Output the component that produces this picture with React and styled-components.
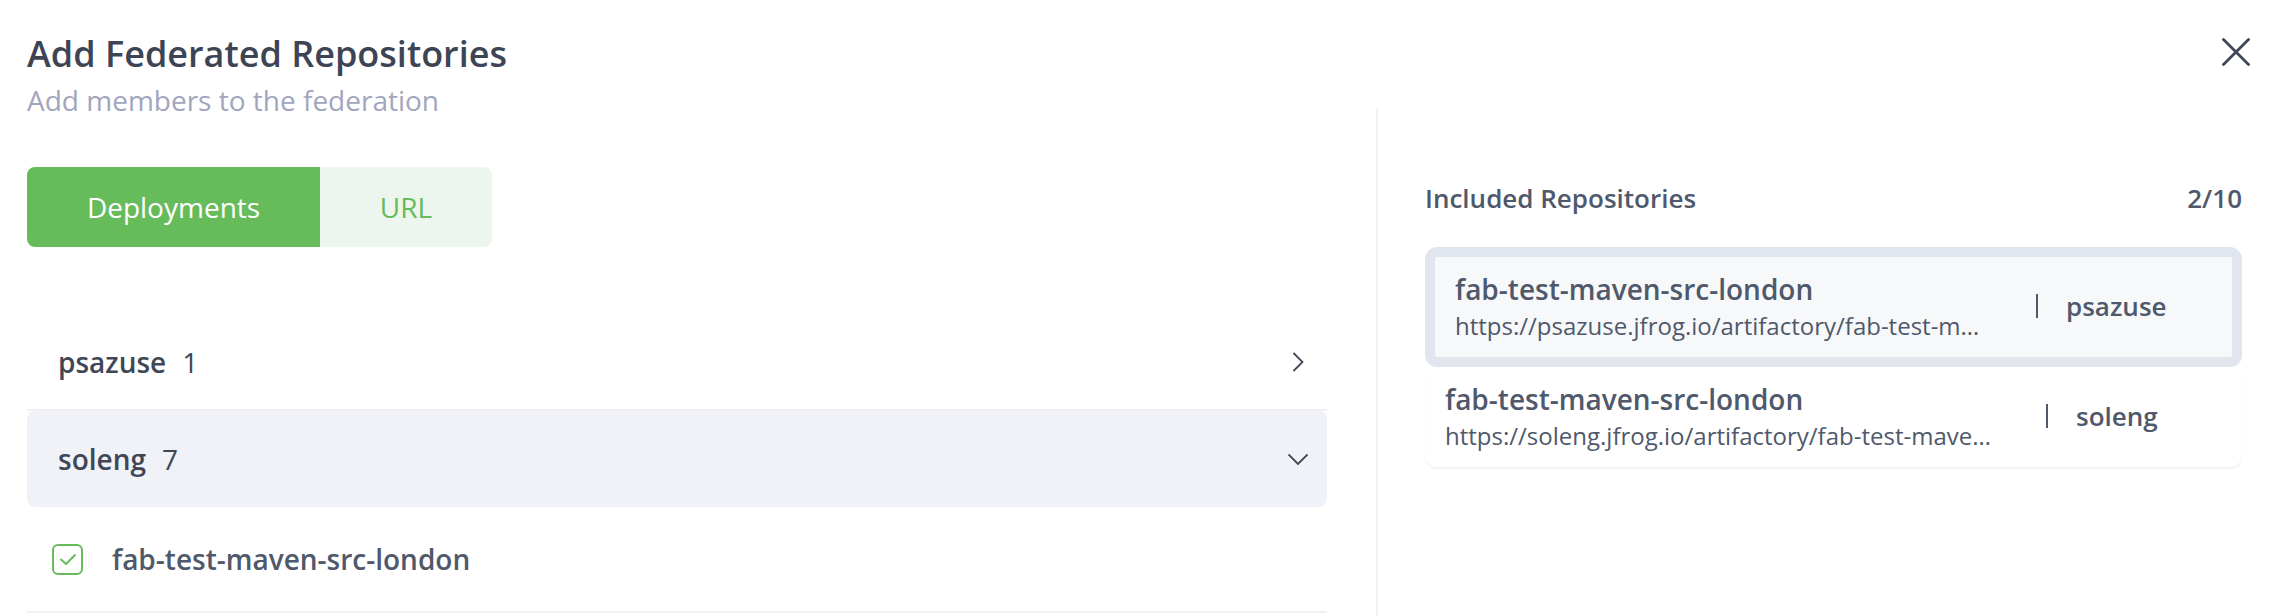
import React from "react";
import styled, { createGlobalStyle } from "styled-components";

const GlobalStyle = createGlobalStyle`
  * {
    box-sizing: border-box;
  }

  body {
    margin: 0;
    background: #ffffff;
    font-family: "Open Sans", "Noto Sans", sans-serif;
  }
`;

const groups = [
  { name: "psazuse", count: 1, open: false },
  { name: "soleng", count: 7, open: true, items: ["fab-test-maven-src-london"] },
];

const included = [
  {
    name: "fab-test-maven-src-london",
    url: "https://psazuse.jfrog.io/artifactory/fab-test-maven-src-london",
    group: "psazuse",
    selected: true,
  },
  {
    name: "fab-test-maven-src-london",
    url: "https://soleng.jfrog.io/artifactory/fab-test-maven-src-london",
    group: "soleng",
    selected: false,
  },
];

const ChevronRight = () => (
  <svg width="20" height="20" viewBox="0 0 20 20" fill="none">
    <path d="M5.5 1 L14.5 10 L5.5 19" stroke="#3f4756" strokeWidth="1.8" />
  </svg>
);

const ChevronDown = () => (
  <svg width="20" height="20" viewBox="0 0 20 20" fill="none">
    <path d="M0.5 5.5 L10 15 L19.5 5.5" stroke="#3f4756" strokeWidth="1.8" />
  </svg>
);

const CloseIcon = () => (
  <svg width="28" height="28" viewBox="0 0 28 28" fill="none">
    <path
      d="M1.5 1.5 L26.5 26.5 M26.5 1.5 L1.5 26.5"
      stroke="#3f4756"
      strokeWidth="2.8"
      strokeLinecap="round"
    />
  </svg>
);

const CheckIcon = () => (
  <svg width="20" height="20" viewBox="0 0 20 20" fill="none">
    <path
      d="M3 10.5 L8 15 L17 6"
      stroke="#66bb5b"
      strokeWidth="2"
      strokeLinecap="round"
      strokeLinejoin="round"
    />
  </svg>
);

const App = () => {
  return (
    <>
      <GlobalStyle />
      <StyleModal>
        <Header>
          <div>
            <Title>Add Federated Repositories</Title>
            <Subtitle>Add members to the federation</Subtitle>
          </div>
          <CloseButton aria-label="Close">
            <CloseIcon />
          </CloseButton>
        </Header>

        <Body>
          <LeftColumn>
            <Tabs>
              <Tab $active $width={293}>
                Deployments
              </Tab>
              <Tab $width={172}>URL</Tab>
            </Tabs>

            <GroupList>
              {groups.map((g) => (
                <React.Fragment key={g.name}>
                  <GroupRow $open={g.open}>
                    <GroupName>
                      {g.name}
                      <GroupCount>{g.count}</GroupCount>
                    </GroupName>
                    {g.open ? <ChevronDown /> : <ChevronRight />}
                  </GroupRow>
                  {g.open &&
                    g.items.map((item) => (
                      <RepoRow key={item}>
                        <Checkbox>
                          <CheckIcon />
                        </Checkbox>
                        <RepoName>{item}</RepoName>
                      </RepoRow>
                    ))}
                </React.Fragment>
              ))}
            </GroupList>
          </LeftColumn>

          <Divider />

          <RightColumn>
            <IncludedHeader>
              <span>Included Repositories</span>
              <span>2/10</span>
            </IncludedHeader>

            {included.map((r) => (
              <IncludedCard key={r.group} $selected={r.selected}>
                <CardText>
                  <CardName>{r.name}</CardName>
                  <CardUrl>{r.url}</CardUrl>
                </CardText>
                <CardSeparator />
                <CardGroup>{r.group}</CardGroup>
              </IncludedCard>
            ))}
          </RightColumn>
        </Body>
      </StyleModal>
    </>
  );
};

const StyleModal = styled.div`
  width: 2294px;
  height: 616px;
  overflow: hidden;
  background: #ffffff;
  display: flex;
  flex-direction: column;
`;

const Header = styled.header`
  display: flex;
  justify-content: space-between;
  align-items: flex-start;
  padding: 30px 44px 0 27px;
`;

const Title = styled.h1`
  margin: 0;
  font-size: 36px;
  line-height: 48px;
  font-weight: 600;
  color: #3d4555;
`;

const Subtitle = styled.p`
  margin: 14px 0 0;
  font-size: 28px;
  line-height: 16px;
  font-weight: 400;
  color: #a1a5bd;
`;

const CloseButton = styled.button`
  margin-top: 8px;
  padding: 0;
  border: none;
  background: none;
  width: 28px;
  height: 28px;
  display: flex;
  cursor: pointer;
`;

const Body = styled.div`
  flex: 1;
  display: flex;
  padding-left: 27px;
`;

const LeftColumn = styled.div`
  width: 1300px;
  flex-shrink: 0;
  padding-top: 59px;
  margin-right: 49px;
`;

const Tabs = styled.div`
  display: flex;
`;

const Tab = styled.div`
  width: ${(p) => p.$width}px;
  height: 80px;
  display: flex;
  align-items: center;
  justify-content: center;
  font-size: 28px;
  font-weight: 400;
  background: ${(p) => (p.$active ? "#66bb5b" : "#edf6ee")};
  color: ${(p) => (p.$active ? "#ffffff" : "#66bb5b")};

  &:first-child {
    border-radius: 8px 0 0 8px;
  }

  &:last-child {
    border-radius: 0 8px 8px 0;
  }
`;

const GroupList = styled.div`
  margin-top: 68px;
  display: flex;
  flex-direction: column;
`;

const GroupRow = styled.div`
  display: flex;
  align-items: center;
  justify-content: space-between;
  padding: 0 19px 0 31px;
  height: 96px;
  background: ${(p) => (p.$open ? "#f0f2f7" : "#ffffff")};
  border-radius: ${(p) => (p.$open ? "8px" : "0")};
  border-bottom: ${(p) => (p.$open ? "none" : "2px solid #eef0f4")};
`;

const GroupName = styled.div`
  font-size: 28px;
  font-weight: 600;
  color: #3f4756;
`;

const GroupCount = styled.span`
  font-weight: 400;
  margin-left: 16px;
`;

const RepoRow = styled.div`
  display: flex;
  align-items: center;
  gap: 29px;
  height: 106px;
  padding-left: 25px;
  border-bottom: 2px solid #eef0f4;
`;

const Checkbox = styled.div`
  width: 31px;
  height: 31px;
  flex-shrink: 0;
  border: 2px solid #66bb5b;
  border-radius: 6px;
  display: flex;
  align-items: center;
  justify-content: center;
  background: #ffffff;
`;

const RepoName = styled.span`
  font-size: 28px;
  font-weight: 600;
  color: #4f596b;
`;

const Divider = styled.div`
  width: 2px;
  flex-shrink: 0;
  background: #f0f1f4;
`;

const RightColumn = styled.div`
  flex: 1;
  padding: 72px 52px 0 47px;
  display: flex;
  flex-direction: column;
`;

const IncludedHeader = styled.div`
  display: flex;
  justify-content: space-between;
  font-size: 26px;
  line-height: 36px;
  font-weight: 600;
  color: #4f596b;
  margin-bottom: 31px;
`;

const IncludedCard = styled.div`
  display: grid;
  grid-template-columns: minmax(0, 1fr) 2px 146px;
  column-gap: 28px;
  align-items: center;
  padding: 13px 20px 15px;
  border-radius: 12px;
  background: ${(p) => (p.$selected ? "#f7f8fa" : "#ffffff")};
  border: ${(p) => (p.$selected ? "10px solid #e1e5ee" : "none")};
  box-shadow: ${(p) =>
    p.$selected ? "none" : "0 2px 2px rgba(40, 50, 80, 0.07)"};
`;

const CardText = styled.div`
  min-width: 0;
  padding-right: 20px;
  display: flex;
  flex-direction: column;
`;

const CardName = styled.span`
  font-size: 28px;
  line-height: 39px;
  font-weight: 600;
  color: #4f596b;
`;

const CardUrl = styled.span`
  font-size: 24px;
  line-height: 33px;
  font-weight: 400;
  color: #4f596b;
  white-space: nowrap;
  overflow: hidden;
  text-overflow: ellipsis;
`;

const CardSeparator = styled.div`
  width: 2px;
  height: 24px;
  background: #4f596b;
`;

const CardGroup = styled.span`
  font-size: 26px;
  font-weight: 600;
  color: #4f596b;
`;

export default App;
